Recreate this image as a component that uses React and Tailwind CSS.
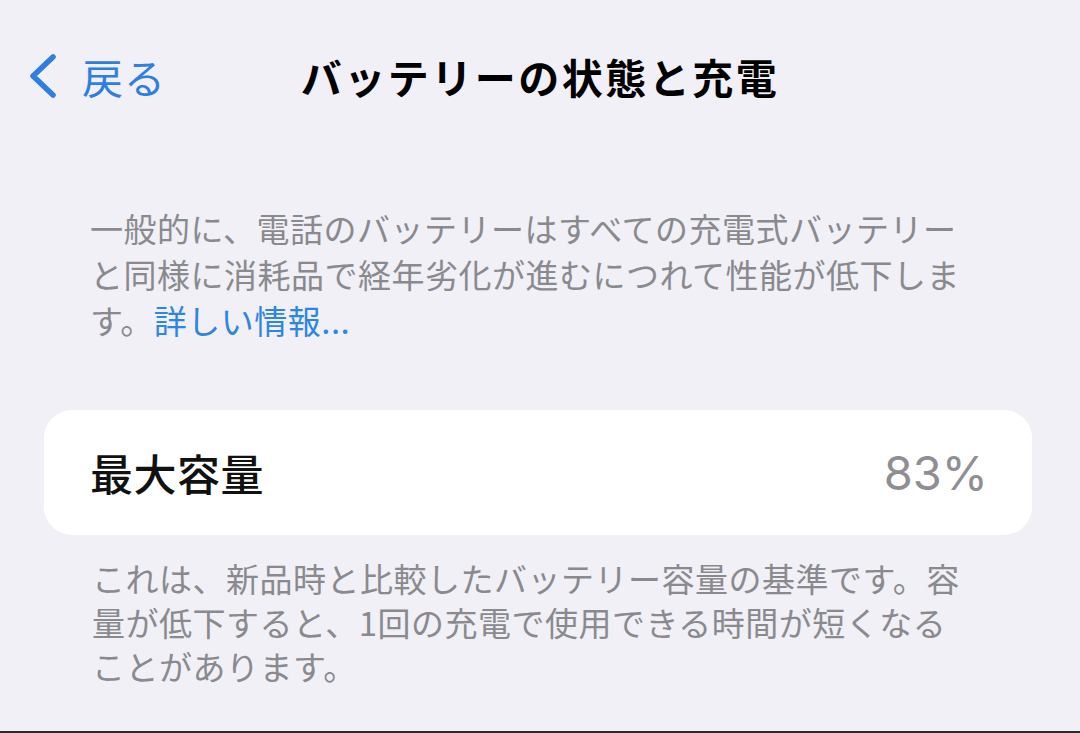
import React from "react"

const jp = { fontFamily: '"Noto Sans CJK JP", "Noto Sans", sans-serif' }
const num = { fontFamily: 'Inter, "Noto Sans", sans-serif' }

const BackChevron = () => (
  <svg width="32" height="46" viewBox="0 0 32 46" fill="none">
    <path d="M27 4 L7 23 L27 42" stroke="currentColor" strokeWidth="5.5" strokeLinecap="round" strokeLinejoin="round" />
  </svg>
)

export default function App() {
  return (
    <div style={jp} className="h-[733px] w-full bg-[#f0f0f6] flex flex-col overflow-hidden">
      {/* Nav bar */}
      <div className="h-[152px] grid grid-cols-[1fr_auto_1fr] items-center">
        <button className="flex items-center gap-[24px] pl-[26px] text-[#2f7fe0]">
          <BackChevron />
          <span className="text-[41px] leading-none tracking-[1px]">戻る</span>
        </button>
        <h1 className="text-[41px] font-bold text-black leading-none tracking-[2.5px]">
          バッテリーの状態と充電
        </h1>
        <div />
      </div>

      {/* Description */}
      <p className="mt-[53px] ml-[90px] w-[880px] text-[33px] leading-[46px] tracking-[0.5px] text-[#8a8a8e]">
        一般的に、電話のバッテリーはすべての充電式バッテリーと同様に消耗品で経年劣化が進むにつれて性能が低下します。
        <span className="text-[#2f86e0]">詳しい情報...</span>
      </p>

      {/* Capacity card */}
      <div className="mt-[67px] mx-[44px] w-[988px] h-[125px] bg-white rounded-[28px] flex items-center justify-between pl-[46px] pr-[44px]">
        <span className="text-[43px] font-medium text-[#111] leading-none tracking-[0.5px]">最大容量</span>
        <span style={num} className="text-[47px] text-[#8e8e93] leading-none">83%</span>
      </div>

      <p className="mt-[21px] ml-[92px] w-[880px] text-[33px] leading-[44px] tracking-[0.5px] text-[#8a8a8e]">
        これは、新品時と比較したバッテリー容量の基準です。容量が低下すると、1回の充電で使用できる時間が短くなることがあります。
      </p>

      <div className="flex-1" />
      <div className="h-[2px] bg-[#2b2b2e]" />
    </div>
  )
}
